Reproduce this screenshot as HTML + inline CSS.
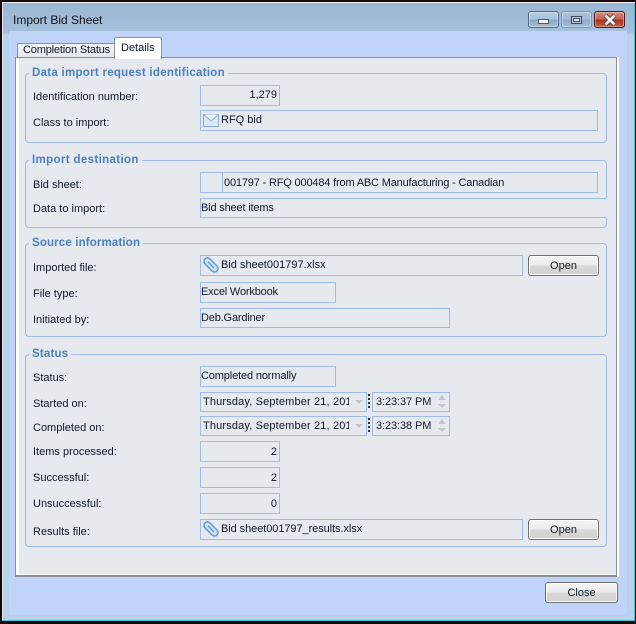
<!DOCTYPE html>
<html><head><meta charset="utf-8">
<style>
html,body{margin:0;padding:0;width:636px;height:624px;overflow:hidden;background:#1a0505}
*{box-sizing:border-box}
div,button,span.a{position:absolute}
body{font-family:"Liberation Sans",sans-serif;font-size:11px;color:#10192a}
.t{white-space:nowrap;line-height:14px;height:14px}
.s{letter-spacing:-.17px}
.f{border:1px solid #9dbde6;background:#e6e9ee;border-width:1.4px}
.g{left:25px;width:582px;border:1px solid #9dbde6;border-radius:4px}
.lg{left:29px;padding:0 3px;background:#e6e9ee;color:#4c80c4;font-weight:bold;font-size:11.5px;letter-spacing:.28px;white-space:nowrap;line-height:14px;height:14px}
.btn{border:1px solid #707070;border-radius:3px;background:linear-gradient(#f4f4f4 0,#ececec 48%,#d9d9d9 52%,#cfcfcf 100%);box-shadow:inset 0 0 0 1px #fbfbfb;text-align:center;line-height:20px;font-size:11px;color:#10192a}
.wb{top:11px;height:17px;border-radius:3px;border:1px solid #5f7a99;box-shadow:inset 0 0 0 1px rgba(255,255,255,.35)}
.d{letter-spacing:.15px;width:146px;overflow:hidden;left:203px}
</style></head><body>
<div style="left:2px;top:2px;width:633px;height:619px;background:linear-gradient(#9bb6d3 0,#a6c1dd 30px,#b8d2ea 32px,#b8d2ea 100%);border-top:1px solid #e8f0f7;border-left:1px solid #d9e6f2"></div>
<div style="left:634px;top:3px;width:1px;height:618px;background:#39c2d8"></div>
<div style="left:2px;top:620px;width:633px;height:1px;background:#39c2d8"></div>
<div style="left:9px;top:31px;width:618px;height:584px;background:#bfd4f8"></div>

<div class="t" style="left:13px;top:13px;font-size:12px;color:#111">Import Bid Sheet</div>

<div class="wb" style="left:528px;width:31px;background:linear-gradient(#b6cde4 0,#a8c2dc 50%,#86a5c6 52%,#a4c0da 100%);border-color:#4f6a8b"></div>
<div style="left:538px;top:19px;width:11px;height:5px;background:#f2f4f7;border:1px solid #4a5a70"></div>
<div class="wb" style="left:561px;width:31px;background:linear-gradient(#a9c2dc 0,#a0bbd7 50%,#8eaccb 52%,#a2bdd8 100%);border-color:#7d97b5"></div>
<div style="left:571px;top:16px;width:11px;height:8px;border:1px solid #3d4b5e;background:#b9cbe0"></div>
<div style="left:573px;top:18px;width:7px;height:4px;border:1px solid #3d4b5e;background:#dfe7f0;border-width:1px"></div>
<div class="wb" style="left:594px;width:31px;background:linear-gradient(#d98a78 0,#c8604c 50%,#a83220 52%,#c75f45 100%);border-color:#4a1c1c"></div>
<svg style="position:absolute;left:603px;top:14px" width="14" height="12" viewBox="0 0 14 12"><path d="M2.5 1.5 L11.5 10.5 M11.5 1.5 L2.5 10.5" stroke="#3d3d3d" stroke-width="4.4"/><path d="M2.5 1.5 L11.5 10.5 M11.5 1.5 L2.5 10.5" stroke="#f0f0f0" stroke-width="2.8"/></svg>

<!-- tabs -->
<div style="left:17px;top:43px;width:99px;height:15px;background:linear-gradient(#f4f6f9,#e3e6ea);border:1px solid #8c9199;border-bottom:none;border-radius:2px 0 0 0"></div>
<div class="t s" style="left:23px;top:42px;height:16px;line-height:16px">Completion Status</div>
<!-- panel -->
<div style="left:15px;top:57px;width:604px;height:520px;background:#e6e9ee;border:3px solid #fff;border-left-width:4px;border-top-width:1px"></div>
<div style="left:15px;top:57px;width:602px;height:520px;border:1px solid #8b8f97;border-bottom-width:2px"></div>
<div style="left:114px;top:37px;width:48px;height:22px;background:#fff;border:1px solid #8c9199;border-bottom:none;border-radius:2px 2px 0 0"></div>
<div class="t" style="left:121px;top:40px;height:16px;line-height:16px">Details</div>

<!-- group 1 -->
<div class="g" style="top:73px;height:70px"></div>
<div class="lg" style="top:66px">Data import request identification</div>
<div class="t" style="left:33px;top:90px">Identification number:</div>
<div class="f" style="left:200px;top:85px;width:80px;height:21px"></div>
<div class="t" style="left:200px;top:88px;width:77px;text-align:right">1,279</div>
<div class="t" style="left:33px;top:116px">Class to import:</div>
<div class="f" style="left:200px;top:110px;width:398px;height:21px"></div>
<svg style="position:absolute;left:203px;top:114px" width="16" height="13" viewBox="0 0 16 13"><rect x=".5" y=".5" width="15" height="12" fill="#dce9f8" stroke="#86abd8"/><path d="M.5 .5 L8 7 L15.5 .5" fill="#f4f8fd" stroke="#86abd8"/></svg>
<div class="t" style="left:221px;top:113px">RFQ bid</div>

<!-- group 2 -->
<div class="g" style="top:160px;height:68px"></div>
<div class="lg" style="top:153px;letter-spacing:.36px">Import destination</div>
<div class="t" style="left:33px;top:178px">Bid sheet:</div>
<div class="f" style="left:200px;top:172px;width:398px;height:21px"></div>
<div style="left:222px;top:172px;width:1px;height:21px;background:#9dbde6"></div>
<div class="t s" style="left:224px;top:176px">001797 - RFQ 000484 from ABC Manufacturing - Canadian</div>
<div class="t" style="left:33px;top:202px">Data to import:</div>
<div class="f" style="left:200px;top:198px;width:407px;height:20px;border-right:none"></div>
<div class="t s" style="left:201px;top:201px">Bid sheet items</div>

<!-- group 3 -->
<div class="g" style="top:243px;height:94px"></div>
<div class="lg" style="top:236px;letter-spacing:.15px">Source information</div>
<div class="t" style="left:33px;top:261px">Imported file:</div>
<div class="f" style="left:200px;top:255px;width:323px;height:21px"></div>
<svg style="position:absolute;left:203px;top:257px" width="16" height="16" viewBox="0 0 16 16"><g transform="rotate(-45 8 8)"><rect x="4.5" y="-.5" width="7" height="17" rx="3.5" fill="#cfe2f6" stroke="#5f93cf" stroke-width="1.4"/><path d="M8 12.5 V3.5" stroke="#5f93cf" stroke-width="1.3"/></g></svg>
<div class="t" style="left:221px;top:258px">Bid sheet001797.xlsx</div>
<button class="btn" style="left:528px;top:255px;width:71px;height:21px;padding:0;font-family:inherit">Open</button>
<div class="t" style="left:33px;top:287px">File type:</div>
<div class="f" style="left:200px;top:282px;width:136px;height:21px"></div>
<div class="t s" style="left:201px;top:285px">Excel Workbook</div>
<div class="t" style="left:33px;top:313px">Initiated by:</div>
<div class="f" style="left:200px;top:308px;width:250px;height:20px"></div>
<div class="t s" style="left:201px;top:311px">Deb.Gardiner</div>

<!-- group 4 -->
<div class="g" style="top:354px;height:193px"></div>
<div class="lg" style="top:347px;letter-spacing:.2px">Status</div>
<div class="t" style="left:33px;top:371px">Status:</div>
<div class="f" style="left:200px;top:366px;width:136px;height:21px"></div>
<div class="t" style="left:201px;top:369px;letter-spacing:-.14px">Completed normally</div>

<div class="t" style="left:33px;top:397px">Started on:</div>
<div class="f" style="left:200px;top:392px;width:167px;height:20px"></div>
<div class="t d" style="top:395px">Thursday, September 21, 2017</div>
<div style="left:355px;top:400px;border:4px solid transparent;border-top:4px solid #c3c8d0;border-bottom:none"></div>
<div style="left:368px;top:394px;width:2px;height:16px;background:repeating-linear-gradient(#333 0,#333 2px,transparent 2px,transparent 4px)"></div>
<div class="f" style="left:372px;top:392px;width:78px;height:20px"></div>
<div class="t" style="left:376px;top:395px;letter-spacing:-.1px">3:23:37 PM</div>
<div style="left:438px;top:395px;border:4px solid transparent;border-bottom:5px solid #c3c8d0;border-top:none"></div>
<div style="left:438px;top:404px;border:4px solid transparent;border-top:4px solid #c3c8d0;border-bottom:none"></div>

<div class="t" style="left:33px;top:421px">Completed on:</div>
<div class="f" style="left:200px;top:416px;width:167px;height:20px"></div>
<div class="t d" style="top:419px">Thursday, September 21, 2017</div>
<div style="left:355px;top:424px;border:4px solid transparent;border-top:4px solid #c3c8d0;border-bottom:none"></div>
<div style="left:368px;top:418px;width:2px;height:16px;background:repeating-linear-gradient(#333 0,#333 2px,transparent 2px,transparent 4px)"></div>
<div class="f" style="left:372px;top:416px;width:78px;height:20px"></div>
<div class="t" style="left:376px;top:419px;letter-spacing:-.1px">3:23:38 PM</div>
<div style="left:438px;top:419px;border:4px solid transparent;border-bottom:5px solid #c3c8d0;border-top:none"></div>
<div style="left:438px;top:428px;border:4px solid transparent;border-top:4px solid #c3c8d0;border-bottom:none"></div>

<div class="t" style="left:33px;top:445px">Items processed:</div>
<div class="f" style="left:200px;top:441px;width:80px;height:21px"></div>
<div class="t" style="left:200px;top:445px;width:77px;text-align:right">2</div>
<div class="t" style="left:33px;top:471px">Successful:</div>
<div class="f" style="left:200px;top:467px;width:80px;height:21px"></div>
<div class="t" style="left:200px;top:471px;width:77px;text-align:right">2</div>
<div class="t" style="left:33px;top:497px">Unsuccessful:</div>
<div class="f" style="left:200px;top:493px;width:80px;height:21px"></div>
<div class="t" style="left:200px;top:497px;width:77px;text-align:right">0</div>
<div class="t" style="left:33px;top:525px">Results file:</div>
<div class="f" style="left:200px;top:519px;width:323px;height:21px"></div>
<svg style="position:absolute;left:203px;top:521px" width="16" height="16" viewBox="0 0 16 16"><g transform="rotate(-45 8 8)"><rect x="4.5" y="-.5" width="7" height="17" rx="3.5" fill="#cfe2f6" stroke="#5f93cf" stroke-width="1.4"/><path d="M8 12.5 V3.5" stroke="#5f93cf" stroke-width="1.3"/></g></svg>
<div class="t" style="left:221px;top:522px;letter-spacing:-.07px">Bid sheet001797_results.xlsx</div>
<button class="btn" style="left:528px;top:519px;width:71px;height:21px;padding:0;font-family:inherit">Open</button>

<button class="btn" style="left:545px;top:582px;width:73px;height:21px;padding:0;font-family:inherit">Close</button>
</body></html>
